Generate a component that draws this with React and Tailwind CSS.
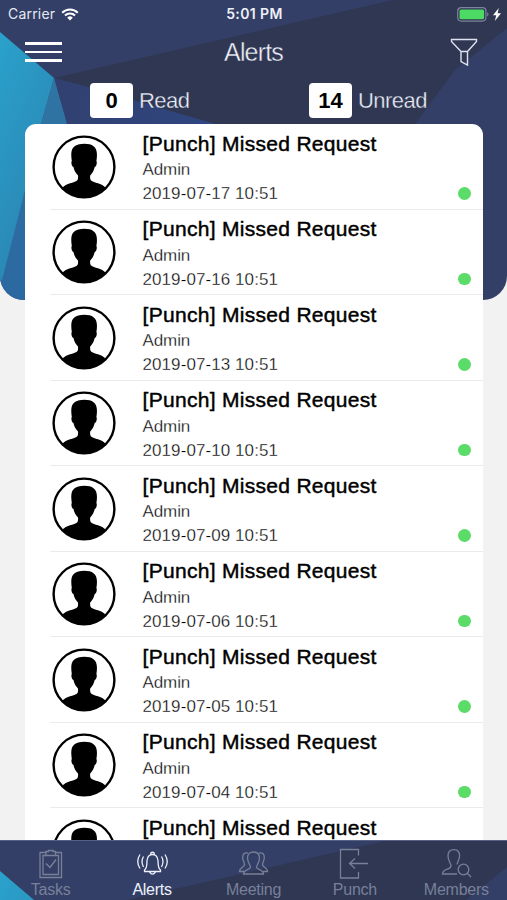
import { useState } from 'react';
import clsx from 'clsx';

const ALERTS = [
  { id: 1, date: '2019-07-17 10:51' },
  { id: 2, date: '2019-07-16 10:51' },
  { id: 3, date: '2019-07-13 10:51' },
  { id: 4, date: '2019-07-10 10:51' },
  { id: 5, date: '2019-07-09 10:51' },
  { id: 6, date: '2019-07-06 10:51' },
  { id: 7, date: '2019-07-05 10:51' },
  { id: 8, date: '2019-07-04 10:51' },
  { id: 9, date: '2019-07-03 10:51' },
];

// Low-poly artwork, shared by the header and the tab bar
const Backdrop = ({ id, className }) => (
  <svg className={className} viewBox="0 0 507 300" preserveAspectRatio="xMidYMin slice" aria-hidden="true">
    <defs>
      <linearGradient id={`${id}-cyan`} x1="0" y1="0" x2="0.5" y2="1">
        <stop offset="0" stopColor="#2aa2cb" />
        <stop offset="1" stopColor="#2b83b2" />
      </linearGradient>
      <linearGradient id={`${id}-blue`} x1="0" y1="0" x2="1" y2="0.3">
        <stop offset="0" stopColor="#31406f" />
        <stop offset="1" stopColor="#2f4681" />
      </linearGradient>
      <linearGradient id={`${id}-teal`} x1="0" y1="0" x2="0" y2="1">
        <stop offset="0" stopColor="#2f75a3" />
        <stop offset="1" stopColor="#2b68a1" />
      </linearGradient>
    </defs>
    <rect width="507" height="300" fill="#333f66" />
    <path d="M54 78 393 0H507V28L455 70 415 124H215L88 87Z" fill="#2f3753" />
    <path d="M54 78 88 87 215 124V300H54Z" fill={`url(#${id}-blue)`} />
    <path d="M54 78 67 124 100 300H0V270Z" fill={`url(#${id}-teal)`} />
    <path d="M0 32 54 78 41 124 25 190 2 280H0Z" fill={`url(#${id}-cyan)`} />
  </svg>
);

const Avatar = () => (
  <svg className="h-[64px] w-[64px] shrink-0" viewBox="0 0 64 64">
    <circle cx="32" cy="32" r="30.4" fill="#fff" stroke="#000" strokeWidth="2.4" />
    <path
      d="M10.500 52.500C14.500 48.500 20 48.200 24.500 46 26 45 26.300 42.500 26 40.500 23.500 38 22 35 21.500 32 19.800 31.500 18.800 27.500 19.800 26 18.800 19 19 14.500 22 11.800 25.500 8.200 37.500 7.800 41.500 11.200 45.200 14 45.500 19 44.400 26 45.400 27.500 44.400 31.500 42.700 32 42 35 40.700 38 38.200 40.500 37.900 42.500 38.200 45 39.700 46 44 48.200 49.700 48.500 53.500 52.500 42 65.500 22 65.500 10.500 52.500Z"
      fill="#000"
    />
  </svg>
);

const StatusBar = () => (
  <div className="grid h-[28px] grid-cols-3 items-center pl-[8px] pr-[6px] font-['Inter',sans-serif] text-white">
    <div className="flex items-center gap-[6px]">
      <span className="text-[14px] leading-none tracking-[0.2px] text-[#e6e9f3]">Carrier</span>
      <svg className="h-[13px] w-[18px]" viewBox="0 0 18 13" fill="none" stroke="#fff" strokeWidth="2.100">
        <path d="M1.200 4.700a11 11 0 0 1 15.600 0M4 7.600a7 7 0 0 1 10 0" />
        <path d="M9 12.500 6.200 9.700a4 4 0 0 1 5.600 0Z" fill="#fff" stroke="none" />
      </svg>
    </div>
    <span className="text-center text-[14px] font-semibold leading-none tracking-[0.4px] text-[#eef0f7]">5:01 PM</span>
    <div className="flex items-center justify-end gap-[4px]">
      <svg className="h-[15px] w-[32px]" viewBox="0 0 32 15">
        <rect x="0.700" y="0.700" width="28.200" height="13.400" rx="3.500" fill="none" stroke="#7d849b" strokeWidth="1.200" />
        <rect x="2.500" y="2.500" width="24.600" height="9.800" rx="1.600" fill="#4cd964" />
        <path d="M30.200 5.200v4.400q1.300-.6 1.300-2.200t-1.300-2.200Z" fill="#7d849b" />
      </svg>
      <svg className="h-[13px] w-[8px]" viewBox="0 0 8 13" fill="#fff">
        <path d="M5.800 0 0 7.200h3.200L1.900 13 8 5.300H4.600Z" />
      </svg>
    </div>
  </div>
);

const Counter = ({ count, label }) => (
  <div className="flex items-center">
    <span className="flex h-[35px] w-[43px] items-center justify-center rounded-[4px] bg-white pt-[1px] text-[22px] font-bold text-black">
      {count}
    </span>
    <span className="ml-[6px] mt-[2px] text-[22px] leading-none tracking-[-0.55px] text-[#eef1fa] [-webkit-text-stroke:0.35px_#303856]">
      {label}
    </span>
  </div>
);

const AlertRow = ({ alert }) => (
  <li className="ml-[25px] flex h-[85.5px] shrink-0 border-b border-[#ebebeb] pl-[2px]">
    <div className="pt-[10.5px]">
      <Avatar />
    </div>
    <div className="ml-[26.5px] flex-1 whitespace-nowrap">
      <h2 className="mt-[6.5px] text-[21px] leading-[26px] tracking-[0.3px] text-black [-webkit-text-stroke:0.45px_#000]">
        [Punch] Missed Request
      </h2>
      <p className="mt-[1.5px] text-[17px] leading-[24px] tracking-[-0.1px] text-black [-webkit-text-stroke:0.3px_#fff]">Admin</p>
      <p className="text-[17px] leading-[24px] tracking-[0.08px] text-black [-webkit-text-stroke:0.3px_#fff]">{alert.date}</p>
    </div>
    <span className="mr-[12px] mt-[63px] h-[12.5px] w-[12.5px] rounded-full bg-[#5bdb68]" />
  </li>
);

const TABS = [
  {
    name: 'Tasks',
    icon: (
      <>
        <path d="M13 4.500H7V29.500H28.500V4.500H22.500M13 7.500H10V26.500H25.500V7.500H22.500" />
        <path d="M13 3.500H15.500V2.500H20V3.500H22.500V7.500H13Z" />
        <path d="M13 15.500 17 19.500 23 11.500" strokeWidth="1.400" />
      </>
    ),
  },
  {
    name: 'Alerts',
    icon: (
      <>
        <path d="M9.500 22C12.500 19.500 11.700 16.500 12 12.500 12.500 8.500 14.500 6.500 17.500 6.500S22.500 8.500 23 12.500C23.300 16.500 22.500 19.500 25.500 22V23.500H9.500ZM15.800 6.500V5Q17.500 3.500 19.200 5V6.500M14.500 23.800Q17.500 28.500 20.500 23.800" />
        <path d="M8.500 8.500Q5.500 13.500 8.500 19M5 6.500Q.5 13.500 5 20.500M26.500 8.500Q29.500 13.500 26.500 19M30 6.500Q34.500 13.500 30 20.500" />
      </>
    ),
  },
  {
    name: 'Meeting',
    icon: (
      <>
        <path d="M7.500 26C7.500 21.500 14.500 22 14.500 19 14.500 17 11.500 15 11.500 9.800 11.500 6 14 4 17.500 4S23.500 6 23.500 9.800C23.500 15 20.500 17 20.500 19 20.500 22 27.500 21.500 27.500 26Z" />
        <path d="M12 5.200C8.500 4 6.300 6 6.800 10.500 7.100 13.500 8.500 14.500 8.500 16.500 8.500 19.500 3.500 19 3.500 23.500H8M23 5.200C26.500 4 28.700 6 28.200 10.500 27.900 13.500 26.500 14.500 26.500 16.500 26.500 19.500 31.500 19 31.500 23.500H27" />
      </>
    ),
  },
  {
    name: 'Punch',
    icon: <path d="M21.500 7.500V1.500H3.500V30H21.500V24M31 15.500H12.500M18 10.500 12.500 15.500 18 20.500" />,
  },
  {
    name: 'Members',
    icon: (
      <>
        <path d="M18 26H3.500C3.500 20 12 22 12 18 12 15.500 9 12.500 9 8 9 3.500 11.500 1.700 14.800 1.700S20.600 3.500 20.600 8C20.600 11.500 18 14.500 18 16.500" />
        <circle cx="24.500" cy="21.500" r="5.300" />
        <path d="M28.300 25.300 32 29" />
      </>
    ),
  },
];

const TabBar = ({ active, onChange }) => (
  <nav className="relative h-[60px] shrink-0 overflow-hidden border-t border-[#566185]">
    <Backdrop id="tabs" className="absolute -top-[2px] left-0 h-[300px] w-full" />
    <div className="relative grid h-full grid-cols-5">
      {TABS.map(({ name, icon }) => (
        <button
          key={name}
          onClick={() => onChange(name)}
          className={clsx('flex flex-col items-center pt-[7px]', name === active ? 'text-[#eef1fb]' : 'text-[#788099]')}
        >
          <svg className="h-[32px] w-[35px] shrink-0" viewBox="0 0 35 32" fill="none" stroke="currentColor" strokeWidth="1.3">
            {icon}
          </svg>
          <span className="mt-[1px] text-[16px] leading-[18px] tracking-[-0.25px]">{name}</span>
        </button>
      ))}
    </div>
  </nav>
);

const App = () => {
  const [tab, setTab] = useState('Alerts');

  return (
    <div className="relative flex h-[900px] w-[507px] flex-col overflow-hidden bg-[#f2f2f2] font-['Liberation_Sans',Arial,sans-serif]">
      <Backdrop id="header" className="absolute left-0 top-0 h-[300px] w-full rounded-b-[24px]" />

      <header className="relative h-[124px] shrink-0">
        <StatusBar />
        <div className="flex h-[48px] items-center justify-between pl-[25px] pr-[29px]">
          <button className="flex w-[37px] flex-col gap-[6px]" aria-label="Menu">
            <span className="h-[2.6px] w-full bg-white" />
            <span className="h-[2.6px] w-full bg-white" />
            <span className="h-[2.6px] w-full bg-white" />
          </button>
          <h1 className="ml-[-5px] text-[25px] leading-none tracking-[-0.85px] text-[#f1f3fb] [-webkit-text-stroke:0.4px_#303856]">Alerts</h1>
          <button aria-label="Filter">
            <svg className="h-[29px] w-[28px]" viewBox="0 0 28 29" fill="none" stroke="#dfe3ee" strokeWidth="1.400">
              <path d="M1.500 1.500H26.500V3.500L17.500 13.500V27L11 23.500V13.500L1.500 3.500ZM11 13.500H17.500" />
            </svg>
          </button>
        </div>
        <div className="flex pl-[90px] pt-[6.5px]">
          <div className="w-[219px]">
            <Counter count={0} label="Read" />
          </div>
          <Counter count={14} label="Unread" />
        </div>
      </header>

      <main className="relative ml-[25px] mr-[24.5px] flex-1 overflow-hidden rounded-t-[11px] bg-white">
        <ul className="flex flex-col">
          {ALERTS.map((alert) => (
            <AlertRow key={alert.id} alert={alert} />
          ))}
        </ul>
      </main>

      <TabBar active={tab} onChange={setTab} />
    </div>
  );
};

export default App;
